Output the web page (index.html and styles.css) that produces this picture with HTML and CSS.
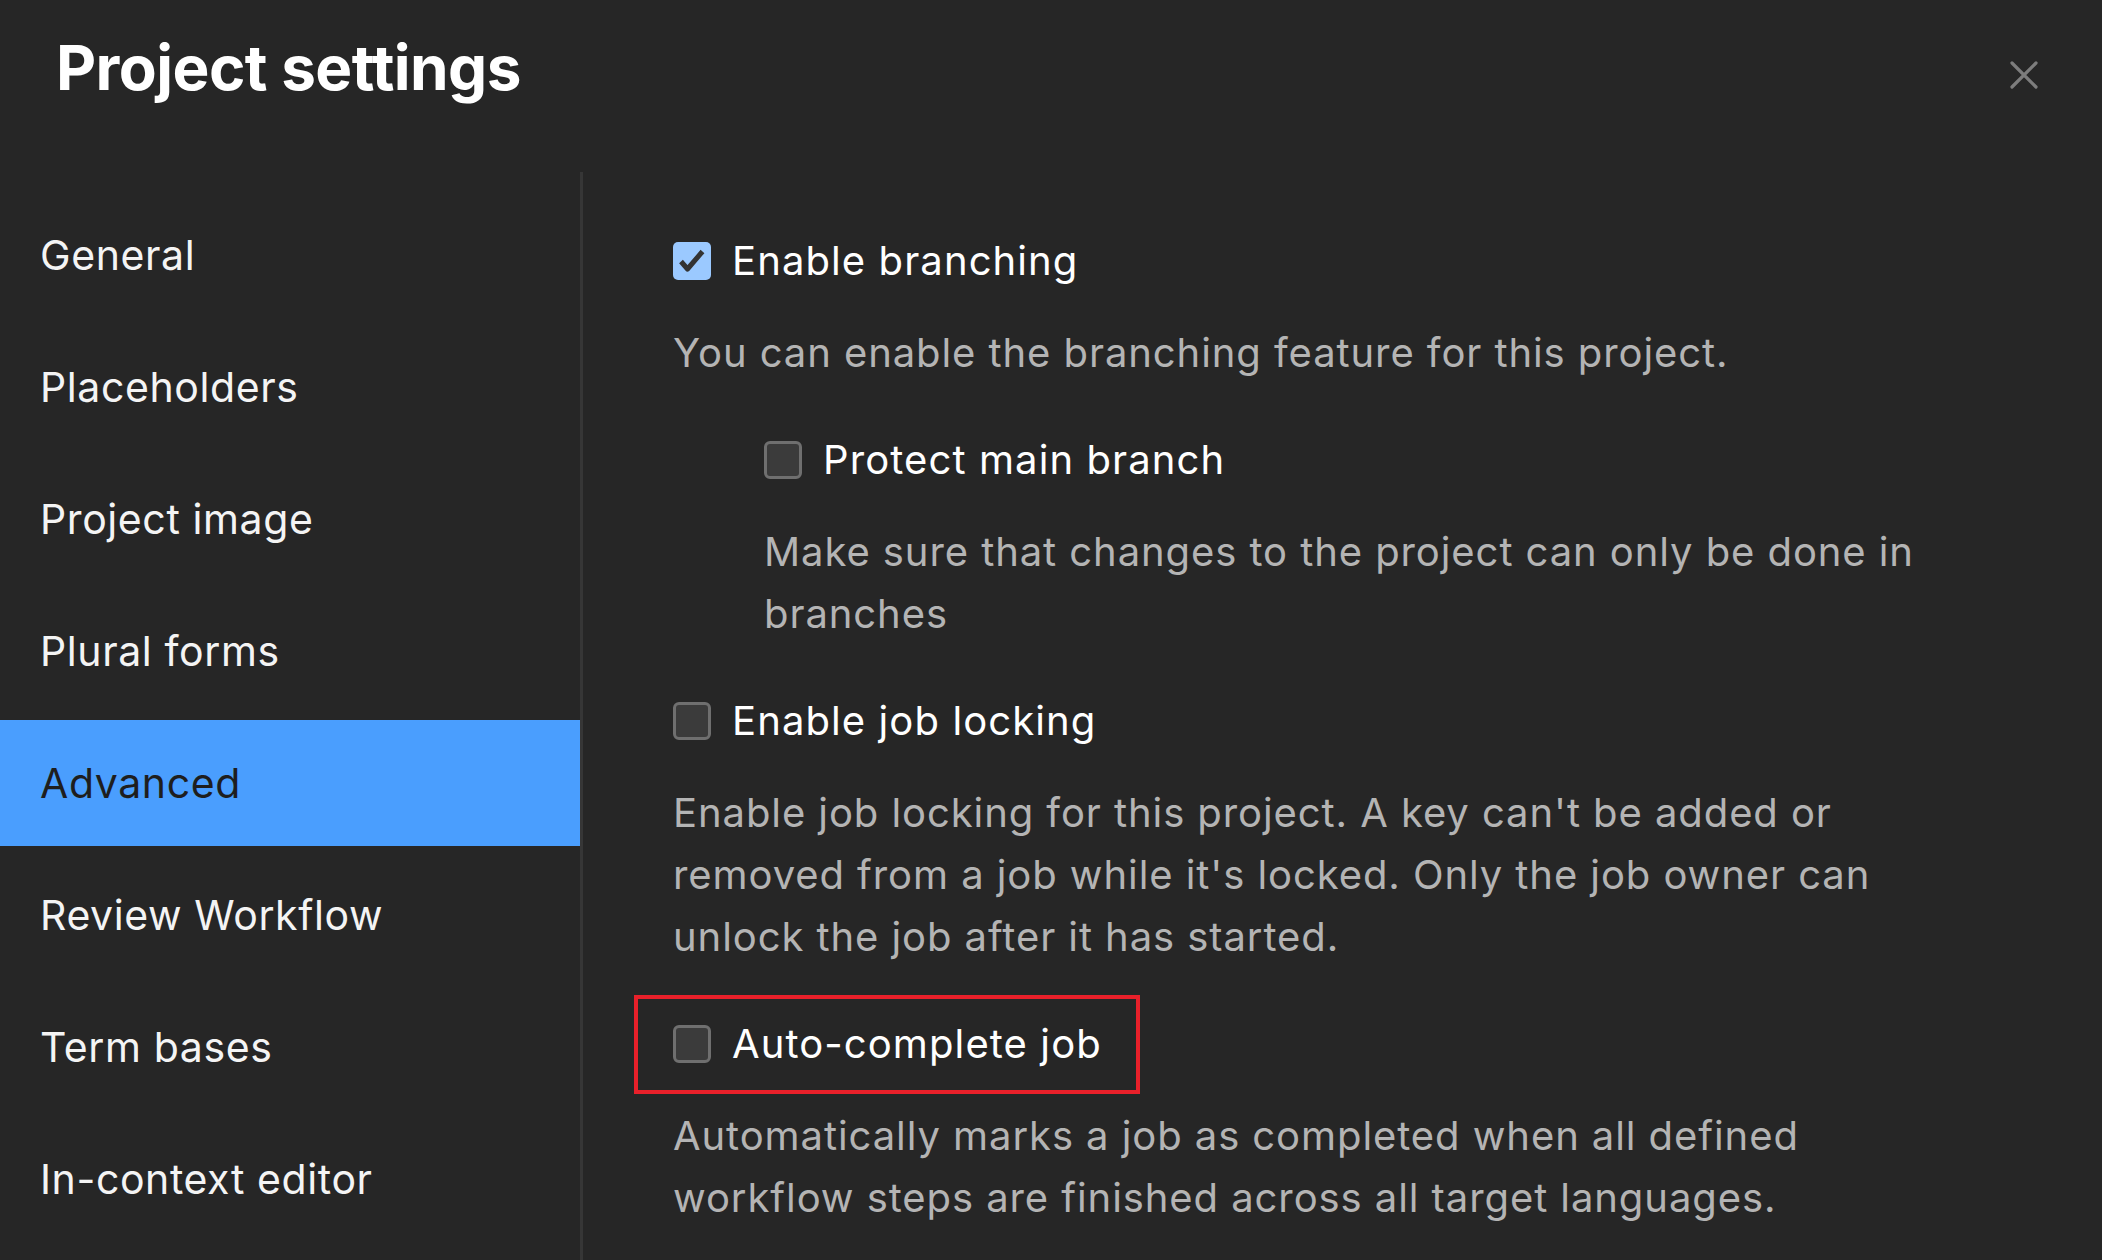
FILE: index.html
```html
<!DOCTYPE html>
<html lang="en">
<head>
<meta charset="utf-8">
<title>Project settings</title>
<link rel="stylesheet" href="styles.css">
</head>
<body>
<div class="modal">
  <header class="modal-header">
    <h1 class="modal-title">Project settings</h1>
    <button class="close-btn" aria-label="Close">
      <svg viewBox="0 0 28 28" width="28" height="28"><path d="M2 2 L26 26 M26 2 L2 26" stroke="#7d7d7d" stroke-width="3.2" stroke-linecap="round" fill="none"/></svg>
    </button>
  </header>
  <div class="modal-body">
    <nav class="sidebar">
      <ul class="nav-list">
        <li class="nav-item">General</li>
        <li class="nav-item">Placeholders</li>
        <li class="nav-item">Project image</li>
        <li class="nav-item">Plural forms</li>
        <li class="nav-item active">Advanced</li>
        <li class="nav-item">Review Workflow</li>
        <li class="nav-item">Term bases</li>
        <li class="nav-item">In-context editor</li>
      </ul>
    </nav>
    <main class="content">
      <section class="setting">
        <div class="check-row">
          <span class="box checked"><svg viewBox="0 0 38 38" width="38" height="38"><path d="M8 19.5 L14.5 27 L29.5 9.5" stroke="#333" stroke-width="5" stroke-linejoin="round" fill="none"/></svg></span>
          <span class="check-label">Enable branching</span>
        </div>
        <p class="desc">You can enable the branching feature for this project.</p>
        <section class="setting nested">
          <div class="check-row">
            <span class="box"></span>
            <span class="check-label">Protect main branch</span>
          </div>
          <p class="desc">Make sure that changes to the project can only be done in branches</p>
        </section>
      </section>
      <section class="setting">
        <div class="check-row">
          <span class="box"></span>
          <span class="check-label">Enable job locking</span>
        </div>
        <p class="desc">Enable job locking for this project. A key can't be added or removed from a job while it's locked. Only the job owner can unlock the job after it has started.</p>
      </section>
      <section class="setting">
        <div class="check-row highlighted">
          <span class="box"></span>
          <span class="check-label">Auto-complete job</span>
          <span class="annotation"></span>
        </div>
        <p class="desc">Automatically marks a job as completed when all defined workflow steps are finished across all target languages.</p>
      </section>
    </main>
  </div>
</div>
</body>
</html>
```
FILE: styles.css
```css
* { box-sizing: border-box; }
html, body {
  margin: 0;
  padding: 0;
  background: #262626;
}
body {
  width: 2102px;
  height: 1260px;
  overflow: hidden;
  font-family: "Inter", "Noto Sans", sans-serif;
  color: #ffffff;
}
.modal {
  display: flex;
  flex-direction: column;
  height: 1260px;
}
.modal-header {
  height: 172px;
  flex: none;
  display: flex;
  justify-content: space-between;
  align-items: flex-start;
  padding: 31px 64px 0 56px;
}
.modal-title {
  margin: 0;
  font-size: 62px;
  line-height: 74px;
  font-weight: 700;
  letter-spacing: -0.55px;
  color: #ffffff;
}
.close-btn {
  margin-top: 30px;
  padding: 0;
  border: 0;
  background: transparent;
  width: 28px;
  height: 28px;
  display: flex;
}
.modal-body {
  flex: 1;
  display: flex;
  min-height: 0;
}
.sidebar {
  width: 583px;
  flex: none;
  border-right: 3px solid #363636;
  padding-top: 20px;
}
.nav-list {
  list-style: none;
  margin: 0;
  padding: 0;
  display: flex;
  flex-direction: column;
  gap: 6px;
}
.nav-item {
  height: 126px;
  display: flex;
  align-items: center;
  padding-left: 40px;
  font-size: 41px;
  letter-spacing: 0.6px;
  color: #f4f4f4;
}
.nav-item.active {
  background: #4a9efe;
  color: #1e1e1e;
}
.content {
  flex: 1;
  padding: 58px 150px 0 90px;
}
.setting + .setting {
  margin-top: 45px;
}
.setting.nested {
  margin-top: 45px;
  margin-left: 91px;
}
.check-row {
  position: relative;
  display: flex;
  align-items: center;
  gap: 21px;
  height: 62px;
}
.box {
  width: 38px;
  height: 38px;
  flex: none;
  border-radius: 6px;
  background: #3b3b3b;
  border: 3px solid #6f6f6f;
}
.box.checked {
  background: #9bc9ff;
  border: 0;
  border-radius: 5px;
}
.box svg { display: block; }
.check-label {
  font-size: 40px;
  line-height: 62px;
  letter-spacing: 1.1px;
  color: #ffffff;
}
.desc {
  margin: 30px 0 0 0;
  font-size: 40px;
  line-height: 62px;
  letter-spacing: 0.92px;
  color: #b4b4b4;
}
.annotation {
  position: absolute;
  left: -39px;
  top: -18px;
  width: 506px;
  height: 99px;
  border: 4px solid #e8202a;
  pointer-events: none;
}
```
